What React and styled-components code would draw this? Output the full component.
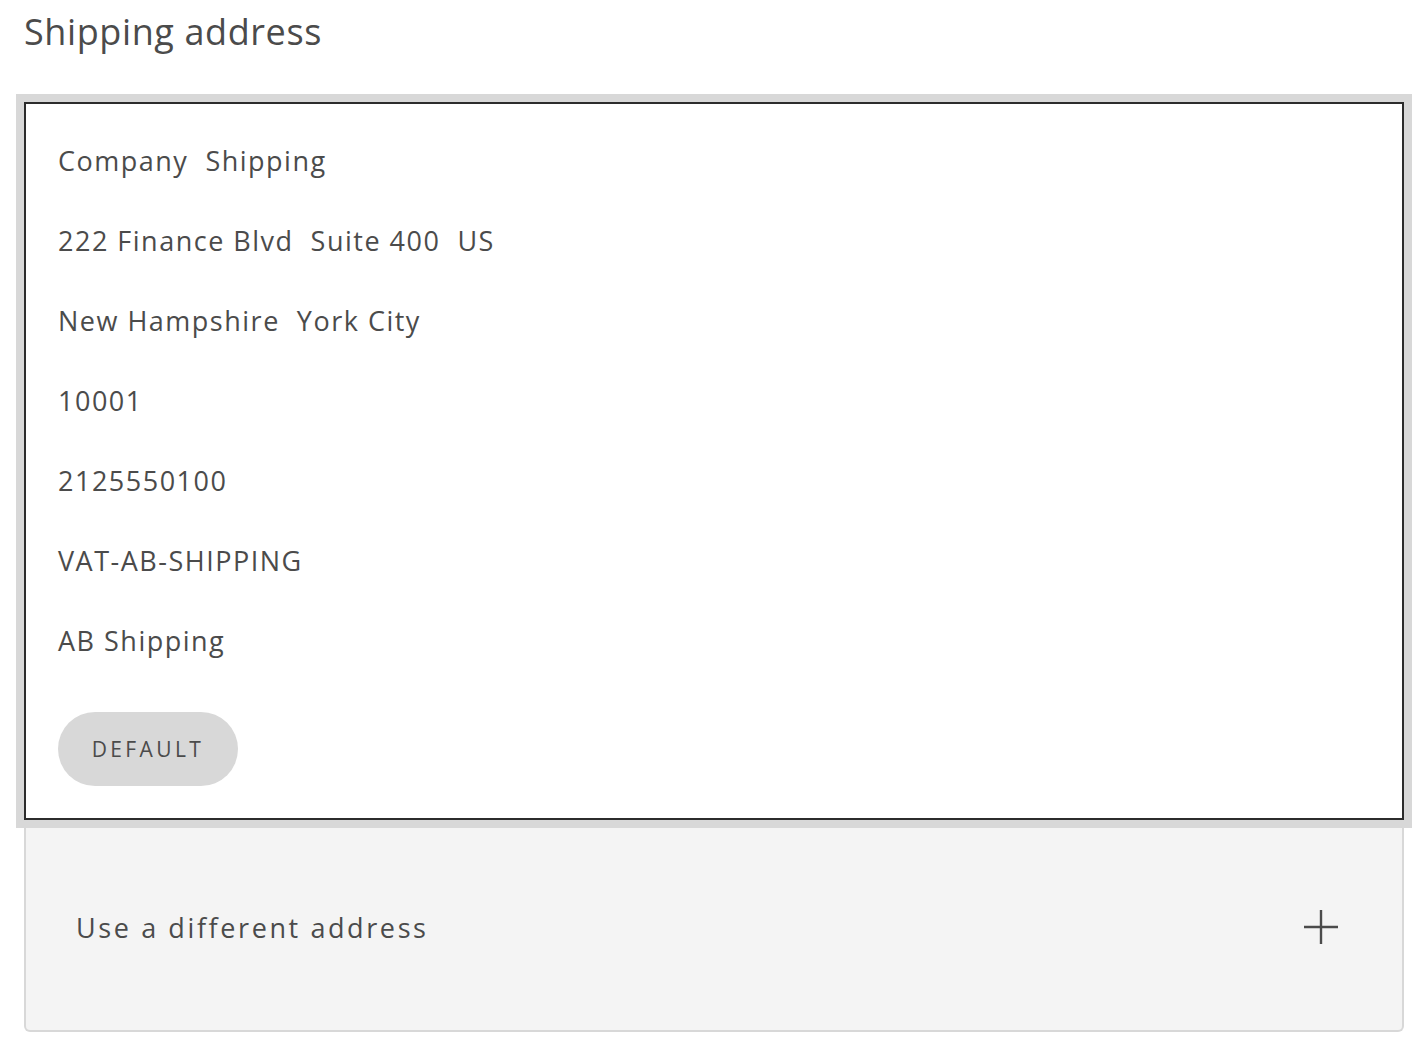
import React from "react";
import styled, { createGlobalStyle } from "styled-components";

const GlobalStyle = createGlobalStyle`
	html, body {
		margin: 0;
		padding: 0;
		background: #ffffff;
	}
	body {
		font-family: "Open Sans", "Noto Sans", sans-serif;
		color: #4b4b4b;
	}
`;

const address = [
	"Company  Shipping",
	"222 Finance Blvd  Suite 400  US",
	"New Hampshire  York City",
	"10001",
	"2125550100",
	"VAT-AB-SHIPPING",
	"AB Shipping",
];

const PlusIcon = () => (
	<svg width="34" height="34" viewBox="0 0 34 34" fill="none" stroke="#4b4b4b" strokeWidth="2.4">
		<line x1="17" y1="0" x2="17" y2="34" />
		<line x1="0" y1="17" x2="34" y2="17" />
	</svg>
);

const App = () => {
	return (
		<Page>
			<GlobalStyle />
			<Heading>Shipping address</Heading>
			<Cards>
				<AddressCard>
					<Lines>
						{address.map((line) => (
							<Line key={line}>{line}</Line>
						))}
					</Lines>
					<DefaultTag>Default</DefaultTag>
				</AddressCard>
				<NewAddress>
					<NewLabel>Use a different address</NewLabel>
					<PlusIcon />
				</NewAddress>
			</Cards>
		</Page>
	);
};

const Page = styled.div`
	padding: 10px 24px 0 24px;
	width: 1380px;
`;
const Heading = styled.h2`
	margin: 0;
	font-size: 36px;
	font-weight: 400;
	line-height: 44px;
	color: #4b4b4b;
	letter-spacing: 0.6px;
`;
const Cards = styled.div`
	margin-top: 48px;
	display: flex;
	flex-direction: column;
`;
const AddressCard = styled.div`
	position: relative;
	z-index: 1;
	background: #fff;
	border: 2px solid #2c2c2c;
	outline: 8px solid #d8d8d8;
	padding: 38px 32px 32px 32px;
	display: flex;
	flex-direction: column;
	align-items: flex-start;
`;
const Lines = styled.div`
	display: flex;
	flex-direction: column;
	gap: 42px;
	margin-bottom: 52px;
`;
const Line = styled.div`
	font-size: 27px;
	line-height: 38px;
	letter-spacing: 1.5px;
	white-space: pre;
	color: #4b4b4b;
`;
const DefaultTag = styled.span`
	display: inline-flex;
	align-items: center;
	justify-content: center;
	width: 180px;
	height: 74px;
	border-radius: 37px;
	background: #d8d8d8;
	font-size: 21px;
	letter-spacing: 3.4px;
	text-transform: uppercase;
	color: #4b4b4b;
`;
const NewAddress = styled.div`
	margin-top: 8px;
	height: 204px;
	box-sizing: border-box;
	background: #f4f4f4;
	border: 2px solid #d8d8d8;
	border-top: none;
	border-radius: 0 0 6px 6px;
	display: flex;
	align-items: center;
	justify-content: space-between;
	padding: 0 64px 4px 50px;
`;
const NewLabel = styled.span`
	font-size: 27px;
	letter-spacing: 2.6px;
	color: #4b4b4b;
`;

export default App;
